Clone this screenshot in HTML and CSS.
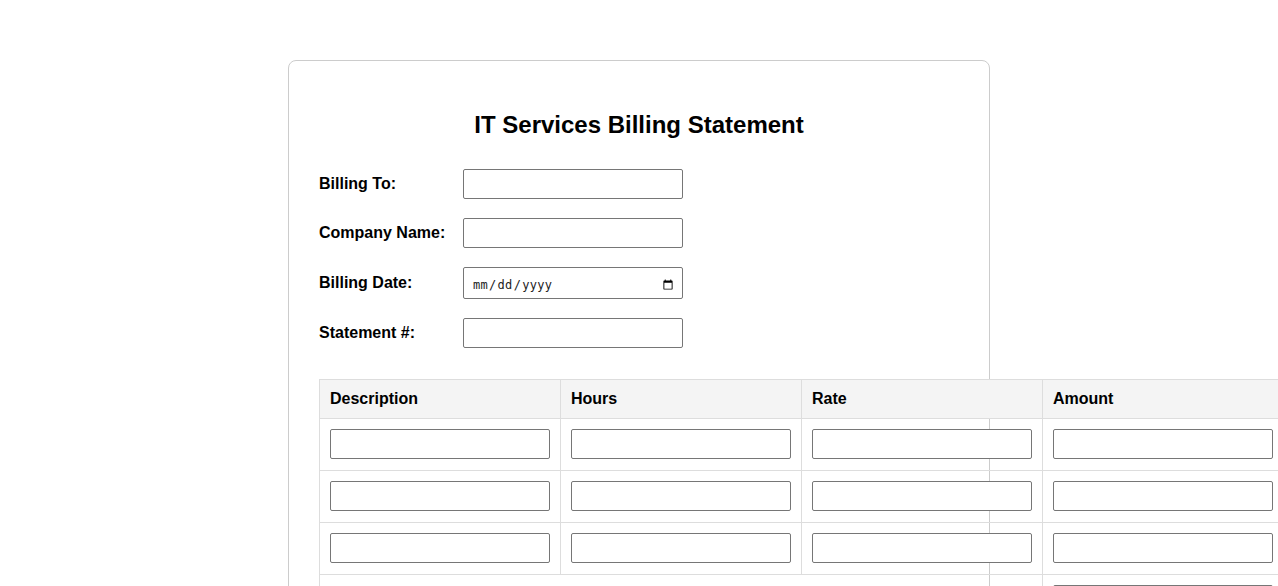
FILE: index.html
```html
<!DOCTYPE html>
<html lang="en">
<head>
<meta charset="utf-8">
<title>IT Services Billing Statement</title>
<link rel="stylesheet" href="styles.css">
</head>
<body>
<div class="statement">
  <h2 class="title">IT Services Billing Statement</h2>
  <div class="form-group">
    <label class="field-label" for="billing-to">Billing To:</label>
    <input class="field" type="text" id="billing-to">
  </div>
  <div class="form-group">
    <label class="field-label" for="company">Company Name:</label>
    <input class="field" type="text" id="company">
  </div>
  <div class="form-group">
    <label class="field-label" for="billing-date">Billing Date:</label>
    <input class="field field-date" type="date" id="billing-date">
  </div>
  <div class="form-group">
    <label class="field-label" for="statement-no">Statement #:</label>
    <input class="field" type="text" id="statement-no">
  </div>
  <table class="items">
    <thead>
      <tr>
        <th>Description</th>
        <th>Hours</th>
        <th>Rate</th>
        <th>Amount</th>
      </tr>
    </thead>
    <tbody>
      <tr>
        <td><input class="cell-input" type="text"></td>
        <td><input class="cell-input" type="text"></td>
        <td><input class="cell-input" type="text"></td>
        <td><input class="cell-input" type="text"></td>
      </tr>
      <tr>
        <td><input class="cell-input" type="text"></td>
        <td><input class="cell-input" type="text"></td>
        <td><input class="cell-input" type="text"></td>
        <td><input class="cell-input" type="text"></td>
      </tr>
      <tr>
        <td><input class="cell-input" type="text"></td>
        <td><input class="cell-input" type="text"></td>
        <td><input class="cell-input" type="text"></td>
        <td><input class="cell-input" type="text"></td>
      </tr>
      <tr>
        <td colspan="3" class="total-label">Total:</td>
        <td><input class="cell-input" type="text"></td>
      </tr>
    </tbody>
  </table>
</div>
</body>
</html>
```
FILE: styles.css
```css
html, body {
  margin: 0;
  padding: 0;
  background: #fff;
}

body {
  font-family: "Liberation Sans", Arial, sans-serif;
  font-size: 16px;
  color: #000;
}

.statement {
  width: 640px;
  margin: 60px auto 0;
  padding: 30px;
  border: 1px solid #cccccc;
  border-radius: 8px;
}

.title {
  margin: 20px 0 30px;
  font-size: 24px;
  line-height: 28px;
  font-weight: bold;
  text-align: center;
}

.form-group {
  display: flex;
  align-items: center;
  margin-bottom: 19px;
}

.field-label {
  width: 144px;
  flex: none;
  font-weight: bold;
  font-size: 16px;
}

.field,
.cell-input {
  box-sizing: border-box;
  width: 220px;
  height: 30px;
  padding: 5px 6px;
  border: 1px solid #767676;
  border-radius: 2px;
  background: #fff;
  font-size: 13.33px;
}

.field-date {
  height: 32px;
  padding: 7px 6px 3px 8px;
  font-family: "DejaVu Sans Mono", monospace;
  font-size: 12px;
  letter-spacing: 0.3px;
  color: #222;
}

.items {
  margin-top: 31px;
  border-collapse: collapse;
  width: 100%;
}

.items th,
.items td {
  border: 1px solid #dddddd;
  text-align: left;
}

.items th {
  background: #f4f4f4;
  padding: 10px;
  line-height: 18px;
  font-weight: bold;
}

.items td {
  padding: 10px 10px 11px;
}

.cell-input {
  display: block;
}

.total-label {
  text-align: right;
  font-weight: bold;
}
```
